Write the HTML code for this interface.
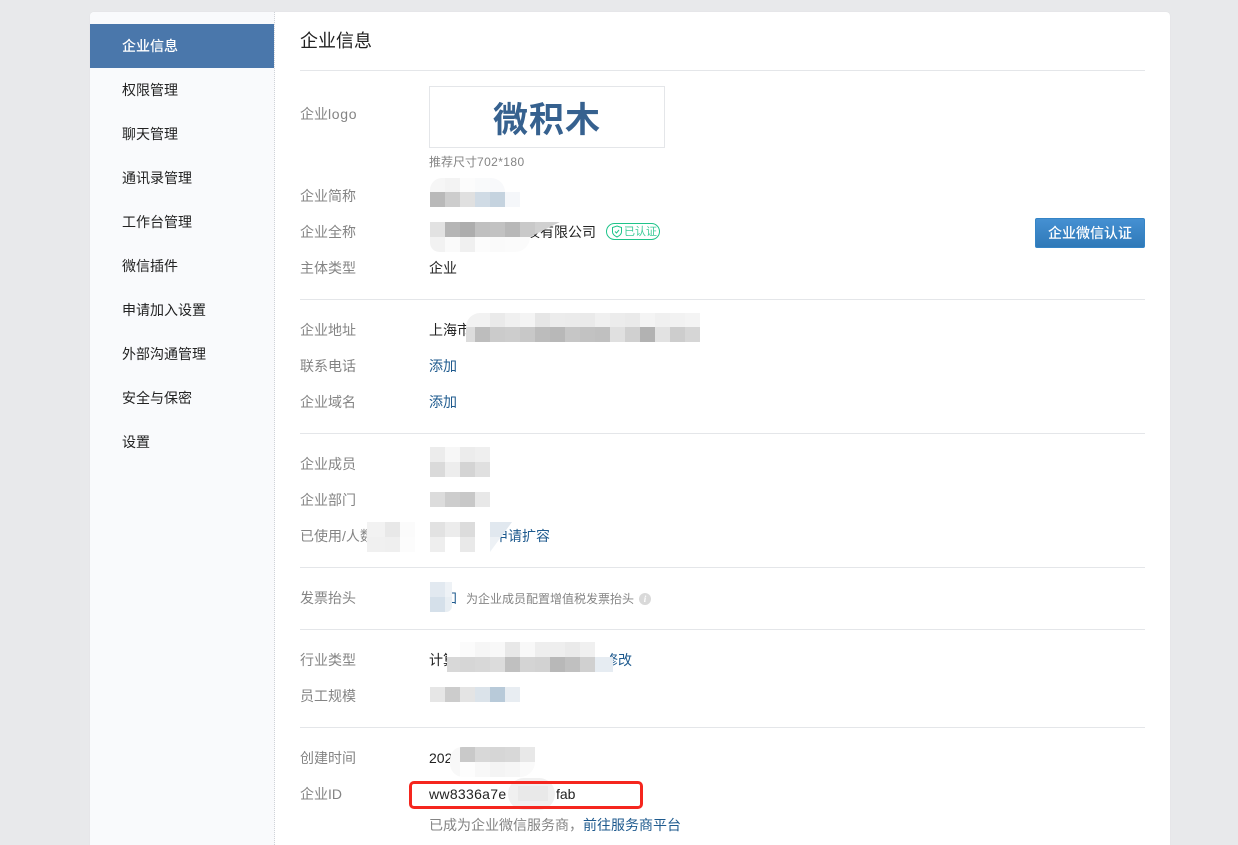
<!DOCTYPE html>
<html lang="zh"><head><meta charset="utf-8"><style>
*{margin:0;padding:0;box-sizing:border-box}
html,body{width:1238px;height:845px;overflow:hidden;background:#e8e9eb;font-family:"Liberation Sans","Noto Sans CJK SC",sans-serif;font-size:14px;color:#222}
#card{position:absolute;left:90px;top:12px;width:1080px;height:833px;background:#fff;border-radius:4px 4px 0 0;box-shadow:0 0 1px #d8dadd}
#side{position:absolute;left:90px;top:12px;width:185px;height:833px;background:#f9fafc;border-right:1px dotted #d0d3d8;border-radius:4px 0 0 0}
.n{position:absolute;left:90px;width:184px;height:44px;line-height:44px;padding-left:32px;color:#222}
.n.a{background:#4a77ab;color:#fff;font-weight:500}
.t,.l,.v,.h{position:absolute;white-space:nowrap;line-height:20px}
.l{left:300px;color:#848484}
.v{left:429px;color:#222}
.a2{color:#1e5a8e}
.h{color:#848484;font-size:12px}
.d{position:absolute;left:300px;width:845px;height:1px;background:#e4e6e9}
.m{position:absolute;height:15px;display:flex}
.m i{display:block;width:15px;height:15px;flex:none}
.w{position:absolute;background:#fff}
</style></head><body>
<div id="card"></div><div id="side"></div>
<div class="n a" style="top:24px">企业信息</div>
<div class="n" style="top:68px">权限管理</div>
<div class="n" style="top:112px">聊天管理</div>
<div class="n" style="top:156px">通讯录管理</div>
<div class="n" style="top:200px">工作台管理</div>
<div class="n" style="top:244px">微信插件</div>
<div class="n" style="top:288px">申请加入设置</div>
<div class="n" style="top:332px">外部沟通管理</div>
<div class="n" style="top:376px">安全与保密</div>
<div class="n" style="top:420px">设置</div>

<div class="t" style="left:300px;top:29px;font-size:18px;line-height:24px;color:#222">企业信息</div>
<div class="d" style="top:70px"></div>
<div class="d" style="top:299px"></div>
<div class="d" style="top:433px"></div>
<div class="d" style="top:567px"></div>
<div class="d" style="top:629px"></div>
<div class="d" style="top:727px"></div>

<div class="l" style="top:104px">企业<span style="letter-spacing:.7px">logo</span></div>
<div style="position:absolute;left:429px;top:86px;width:236px;height:62px;border:1px solid #e4e6e9;text-align:center;font-weight:700;font-size:35px;line-height:67px;color:#36618f;letter-spacing:1px">微积木</div>
<div class="h" style="left:429px;top:152px">推荐尺寸<span style="letter-spacing:.4px">702*180</span></div>

<div class="l" style="top:186px">企业简称</div>
<div class="m" style="left:430px;top:178px;height:14px;border-radius:12px 14px 0 0;overflow:hidden"><i style="background:#f6f6f6"></i><i style="background:#f3f3f3"></i><i style="background:#fcfcfc"></i><i style="background:#f9fafb"></i><i style="background:#f8f9fb"></i></div>
<div class="m" style="left:430px;top:192px"><i style="background:#b9b9b9"></i><i style="background:#cdcdcd"></i><i style="background:#e0e0e0"></i><i style="background:#d0dbe5"></i><i style="background:#c5d3df"></i><i style="background:#f5f7fa"></i></div>

<div class="l" style="top:222px">企业全称</div>
<div class="v" style="left:526px;top:222px">技有限公司</div>
<div class="m" style="left:430px;top:222px;width:130px;clip-path:polygon(0 0,130px 0,100px 15px,0 15px)"><i style="background:#e2e2e2"></i><i style="background:#b5b5b5"></i><i style="background:#adadad"></i><i style="background:#c0c0c0"></i><i style="background:#c2c2c2"></i><i style="background:#b8b8b8"></i><i style="background:#c9c9c9"></i><i style="background:#d0d0d0"></i><i style="background:#d0d0d0;width:10px"></i></div>
<div class="m" style="left:430px;top:237px;width:100px;border-radius:0 0 16px 10px;overflow:hidden"><i style="background:#f2f2f2"></i><i style="background:#fafafa"></i><i style="background:#f0f0f0"></i><i style="background:#fcfcfc"></i><i style="background:#fafafa"></i><i style="background:#fbfbfb"></i><i style="background:#fbfbfb"></i></div>
<div style="position:absolute;left:606px;top:223px;width:54px;height:17px;border:1px solid #1fc48a;border-radius:9px"></div>
<svg style="position:absolute;left:611px;top:225px" width="12" height="13" viewBox="0 0 12 13" fill="none" stroke="#1fc48a"><path d="M6 1 10.500 2.500V7C10.500 9.500 8 11 6 12 4 11 1.500 9.500 1.500 7V2.500Z"/><path d="M4 6.500 5.500 8 8 5"/></svg>
<div class="t" style="left:624px;top:222px;font-size:11px;color:#3dcb98">已认证</div>
<div style="position:absolute;left:1035px;top:218px;width:110px;height:30px;background:linear-gradient(#4590d2,#2f79b8);border:1px solid #3484c6;border-radius:2px;color:#fff;text-align:center;line-height:29px;font-weight:500">企业微信认证</div>

<div class="l" style="top:258px">主体类型</div>
<div class="v" style="top:258px">企业</div>

<div class="l" style="top:320px">企业地址</div>
<div class="v" style="top:320px">上海市</div>
<div class="m" style="left:466px;top:313px;height:14px;border-radius:14px 0 0 0;overflow:hidden"><i style="background:#f2f2f2;width:9px"></i><i style="background:#f2f2f2"></i><i style="background:#eaeaea"></i><i style="background:#f0f0f0"></i><i style="background:#f4f4f4"></i><i style="background:#e6e6e6"></i><i style="background:#ececec"></i><i style="background:#ebebeb"></i><i style="background:#eaeaea"></i><i style="background:#f0f0f0"></i><i style="background:#ececec"></i><i style="background:#eaeaea"></i><i style="background:#f4f4f4"></i><i style="background:#f0f0f0"></i><i style="background:#f2f2f2"></i><i style="background:#f4f4f4"></i></div>
<div class="m" style="left:466px;top:327px;height:15px"><i style="background:#dcdcdc;width:9px"></i><i style="background:#bdbdbd"></i><i style="background:#cbcbcb"></i><i style="background:#cdcdcd"></i><i style="background:#c8c8c8"></i><i style="background:#bcbcbc"></i><i style="background:#b8b8b8"></i><i style="background:#c6c6c6"></i><i style="background:#c2c2c2"></i><i style="background:#c0c0c0"></i><i style="background:#e0e0e0"></i><i style="background:#d0d0d0"></i><i style="background:#b2b2b2"></i><i style="background:#e2e2e2"></i><i style="background:#cdcdcd"></i><i style="background:#d6d6d6"></i></div>

<div class="l" style="top:356px">联系电话</div>
<div class="v a2" style="top:356px">添加</div>
<div class="l" style="top:392px">企业域名</div>
<div class="v a2" style="top:392px">添加</div>

<div class="l" style="top:454px">企业成员</div>
<div class="m" style="left:430px;top:447px"><i style="background:#ececec"></i><i style="background:#f7f7f7"></i><i style="background:#ececec"></i><i style="background:#efefef"></i></div>
<div class="m" style="left:430px;top:462px"><i style="background:#dadada"></i><i style="background:#ededed"></i><i style="background:#d4d4d4"></i><i style="background:#e0e0e0"></i></div>

<div class="l" style="top:490px">企业部门</div>
<div class="m" style="left:430px;top:492px"><i style="background:#dcdcdc"></i><i style="background:#cdcdcd"></i><i style="background:#c8c8c8"></i><i style="background:#e8e8e8"></i></div>

<div class="l" style="top:526px">已使用/人数</div>
<div class="v a2" style="left:494px;top:526px">申请扩容</div>
<div class="w" style="left:367px;top:521px;height:31px;width:123px"></div>
<div class="w" style="left:490px;top:522px;width:22px;height:30px;clip-path:polygon(0 0,22px 0,0 30px)"></div>
<div class="m" style="left:367px;top:522px"><i style="background:#f2f2f2;width:18px"></i><i style="background:#e8e8e8"></i><i style="background:#fbfbfb"></i><i style="background:#fff"></i><i style="background:#e2e2e2"></i><i style="background:#ececec"></i><i style="background:#dcdcdc"></i><i style="background:#fff"></i><i style="background:#e1e8ef;clip-path:polygon(0 0,22px 0,11px 15px,0 15px);width:22px"></i></div>
<div class="m" style="left:367px;top:537px"><i style="background:#f0f0f0;width:18px"></i><i style="background:#efefef"></i><i style="background:#fcfcfc"></i><i style="background:#fff"></i><i style="background:#eeeeee"></i><i style="background:#fff"></i><i style="background:#e9e9e9"></i><i style="background:#fff"></i><i style="background:#edf1f5;clip-path:polygon(0 0,11px 0,0 15px);width:22px"></i></div>

<div class="l" style="top:588px">发票抬头</div>
<div class="v a2" style="left:443px;top:588px">加</div>
<div class="m" style="left:430px;top:582px;width:22px;height:15px"><i style="background:#e2e9f0"></i><i style="background:#eef2f6;width:7px"></i></div>
<div class="m" style="left:430px;top:597px;width:22px;border-radius:0 0 6px 0;overflow:hidden;height:15px"><i style="background:#d5e0ea"></i><i style="background:#e8eef3;width:7px"></i></div>
<div class="h" style="left:466px;top:589px">为企业成员配置增值税发票抬头</div>
<div style="position:absolute;left:639px;top:593px;width:12px;height:12px;border-radius:50%;background:#d9d9d9;color:#fff;font:italic 700 9px/12px 'Liberation Serif',serif;text-align:center">i</div>

<div class="l" style="top:650px">行业类型</div>
<div class="v" style="top:650px">计算</div>
<div class="v a2" style="left:604px;top:650px">修改</div>
<div class="m" style="left:447px;top:642px;border-radius:32px 36px 0 0;overflow:hidden;height:15px"><i style="background:#fff;width:13px"></i><i style="background:#fbfbfb"></i><i style="background:#f6f6f6"></i><i style="background:#f8f8f8"></i><i style="background:#e8e8e8"></i><i style="background:#f8f8f8"></i><i style="background:#eeeeee"></i><i style="background:#eeeeee"></i><i style="background:#eaeaea"></i><i style="background:#f0f0f0"></i><i style="background:#fff"></i></div>
<div class="m" style="left:447px;top:657px"><i style="background:#d8d8d8;width:13px"></i><i style="background:#d6d6d6"></i><i style="background:#d8d8d8"></i><i style="background:#dcdcdc"></i><i style="background:#c0c0c0"></i><i style="background:#d4d4d4"></i><i style="background:#d2d2d2"></i><i style="background:#b8b8b8"></i><i style="background:#c0c0c0"></i><i style="background:#d0d0d0"></i><i style="background:#e6ecf2;width:18px"></i></div>

<div class="l" style="top:686px">员工规模</div>
<div class="m" style="left:430px;top:687px"><i style="background:#e6e6e6"></i><i style="background:#cccccc"></i><i style="background:#e4e4e4"></i><i style="background:#dbe3ea"></i><i style="background:#b8cad9"></i><i style="background:#e8edf2"></i></div>

<div class="l" style="top:748px">创建时间</div>
<div class="v" style="top:748px">202</div>
<div class="m" style="left:450px;top:747px;border-radius:12px 0 0 0;overflow:hidden"><i style="background:#f8f8f8;width:10px"></i><i style="background:#c9c9c9"></i><i style="background:#d8d8d8"></i><i style="background:#d6d6d6"></i><i style="background:#d8d8d8"></i><i style="background:#e8e8e8"></i></div>
<div class="m" style="left:450px;top:762px;border-radius:0 0 16px 14px;overflow:hidden"><i style="background:#f8f8f8;width:10px"></i><i style="background:#fdfdfd"></i><i style="background:#f8f8f8"></i><i style="background:#f4f4f4"></i><i style="background:#f6f6f6"></i><i style="background:#fafafa"></i></div>

<div class="l" style="top:784px">企业ID</div>
<div class="v" style="top:784px;letter-spacing:.3px">ww8336a7e</div>
<div class="v" style="left:556px;top:784px">fab</div>
<div class="w" style="left:508px;top:778px;width:47px;height:32px;background:#f0f0f0;border-radius:16px"></div>
<div class="w" style="left:518px;top:786px;width:30px;height:15px;background:#e9e9e9"></div>
<div style="position:absolute;left:409px;top:781px;width:234px;height:28px;border:3px solid #f5261e;border-radius:5px"></div>

<div class="l" style="left:429px;top:815px;color:#848484">已成为企业微信服务商，<span class="a2">前往服务商平台</span></div>
</body></html>
